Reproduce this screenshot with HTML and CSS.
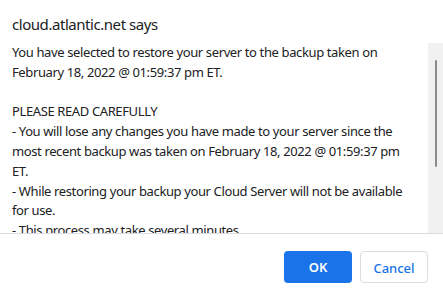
FILE: index.html
```html
<!DOCTYPE html>
<html lang="en">
<head>
    <meta charset="UTF-8">
    <title>cloud.atlantic.net says</title>
    <link rel="stylesheet" href="styles.css">
</head>
<body>
    <div class="dialog">
        <h1 class="title">cloud.atlantic.net says</h1>

        <div class="body-row">
            <div class="message">
                <p>You have selected to restore your server to the backup taken on February 18, 2022 @ 01:59:37 pm ET.</p>
                <p class="blank">&nbsp;</p>
                <p>PLEASE READ CAREFULLY</p>
                <p>- You will lose any changes you have made to your server since the most recent backup was taken on February 18, 2022 @ 01:59:37 pm ET.</p>
                <p>- While restoring your backup your Cloud Server will not be available for use.</p>
                <p>- This process may take several minutes.</p>
            </div>
            <div class="scroll-track">
                <div class="scroll-thumb"></div>
            </div>
        </div>

        <div class="actions">
            <button class="btn btn-ok">OK</button>
            <button class="btn btn-cancel">Cancel</button>
        </div>
    </div>
</body>
</html>
```

FILE: styles.css
```css
body {
    margin: 0;
    background-color: #ffffff;
    font-family: "Noto Sans", "Open Sans", sans-serif;
    color: #202124;
}

.dialog {
    width: 443px;
    height: 295px;
    padding-top: 14px;
    box-sizing: border-box;
}

.title {
    margin: 0 0 9px 0;
    padding: 0 12px;
    font-size: 15px;
    font-weight: normal;
    line-height: 20px;
    letter-spacing: -0.45px;
}

.body-row {
    display: flex;
    height: 190px;
    border-bottom: 1px solid #dadce0;
}

.message {
    flex: 1;
    padding: 0 14px 0 12px;
    overflow: hidden;
    font-size: 13px;
    line-height: 19.8px;
    letter-spacing: -0.38px;
}

.message p {
    margin: 0;
}

.scroll-track {
    width: 15px;
    background-color: #f1f1f1;
}

.scroll-thumb {
    width: 2px;
    height: 107px;
    margin: 17px 0 0 7px;
    background-color: #8b8b8b;
    border-radius: 1px;
}

.actions {
    display: flex;
    justify-content: flex-end;
    gap: 8px;
    padding: 17px 15px 12px;
}

.btn {
    width: 68px;
    height: 32px;
    padding: 0;
    border-radius: 4px;
    font-family: inherit;
    font-size: 13px;
    line-height: 32px;
    cursor: pointer;
}

.btn-ok {
    background-color: #1a73e8;
    border: none;
    color: #ffffff;
    font-weight: 600;
}

.btn-cancel {
    background-color: #ffffff;
    border: 1px solid #dadce0;
    color: #1a73e8;
    font-weight: 500;
}
```
